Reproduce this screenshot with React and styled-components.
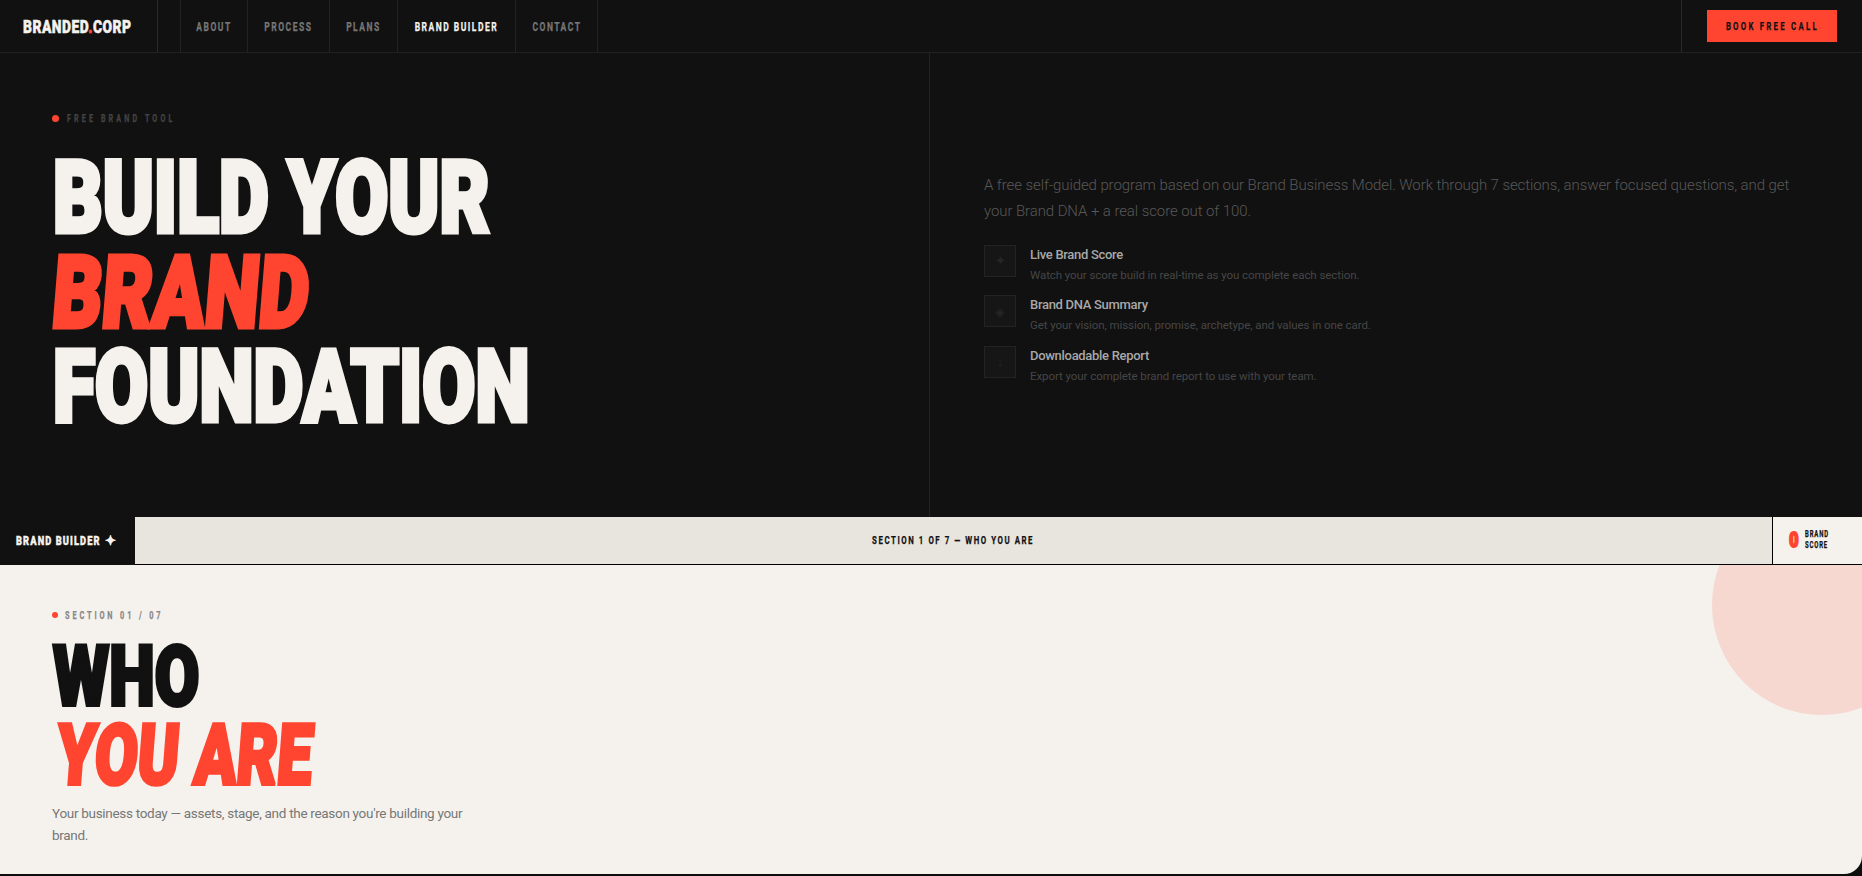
import React from 'react';
import styled, { createGlobalStyle } from 'styled-components';

const RED = '#ff4530';
const INK = '#111111';
const CREAM = '#f5f2ed';

const GlobalStyle = createGlobalStyle`
  * { box-sizing: border-box; }
  html, body { margin: 0; padding: 0; background: #0d0d0d; }
  body { font-family: Roboto, "Liberation Sans", sans-serif; overflow: hidden; }
`;

const Page = styled.div`
  width: 1862px;
  height: 876px;
  display: flex;
  flex-direction: column;
`;

// the labels are a narrow display face, so roboto gets squeezed sideways
const Squeeze = styled.span`
  display: inline-block;
  flex: none;
  white-space: nowrap;
  transform-origin: ${p => p.$origin || 'center'} center;
  transform: scaleX(${p => p.$x || 0.68});
  margin-right: ${p => (p.$trim ? -p.$trim : 0)}px;
`;

const labelFont = `
  font-family: Roboto, sans-serif;
  font-weight: 700;
  text-transform: uppercase;
  -webkit-text-stroke: 0.25px currentColor;
`;

/* top nav */
const Nav = styled.nav`
  height: 53px;
  flex: none;
  display: flex;
  align-items: stretch;
  background: ${INK};
  border-bottom: 1px solid #222;
`;

const Logo = styled.div`
  width: 158px;
  padding-left: 23px;
  display: flex;
  align-items: center;
  border-right: 1px solid #2a2a2a;
  ${labelFont}
  font-weight: 900;
  font-size: 18px;
  letter-spacing: 0.6px;
  color: ${CREAM};
  -webkit-text-stroke: 0.5px ${CREAM};

  b { color: ${RED}; -webkit-text-stroke: 1px ${RED}; }
`;

const NavLinks = styled.div`
  margin-left: 22px;
  display: flex;
  border-left: 1px solid #222;
`;

const NavLink = styled.a`
  width: ${p => p.$w}px;
  display: flex;
  align-items: center;
  justify-content: center;
  border-right: 1px solid #222;
  ${labelFont}
  font-size: 12.5px;
  letter-spacing: 2.2px;
  color: ${p => (p.$active ? CREAM : '#777')};
`;

const NavRight = styled.div`
  margin-left: auto;
  width: 181px;
  display: flex;
  align-items: center;
  justify-content: flex-end;
  padding-right: 25px;
  border-left: 1px solid #2a2a2a;
`;

const CallButton = styled.button`
  width: 130px;
  height: 32px;
  border: 0;
  padding: 0;
  display: flex;
  align-items: center;
  justify-content: center;
  background: ${RED};
  color: ${INK};
  ${labelFont}
  font-size: 11.5px;
  letter-spacing: 3.3px;
`;

/* hero */
const Hero = styled.section`
  height: 464px;
  flex: none;
  display: grid;
  grid-template-columns: 930px 1fr;
  background: ${INK};
`;

const HeroLeft = styled.div`
  padding: 58px 0 0 52px;
  border-right: 1px solid #222;
`;

const Eyebrow = styled.div`
  display: flex;
  align-items: center;
  height: 14px;
  gap: ${p => p.$gap}px;
  ${labelFont}
  font-size: 10.5px;
  letter-spacing: ${p => p.$spacing}px;
  color: ${p => p.$color};
`;

const Dot = styled.i`
  width: ${p => p.$size}px;
  height: ${p => p.$size}px;
  border-radius: 50%;
  background: ${RED};
`;

const HeroTitle = styled.h1`
  margin: 26px 0 0;
  font-family: Roboto, sans-serif;
  font-weight: 900;
  font-size: 100px;
  line-height: 94.5px;
  color: ${CREAM};
  white-space: nowrap;
`;

const TitleLine = styled.span`
  display: block;
  width: max-content;
  margin-left: ${p => p.$indent || 0}px;
  transform-origin: left center;
  transform: scaleX(${p => p.$x}) skewX(${p => p.$skew || 0}deg);
  color: ${p => p.$color || 'inherit'};
  -webkit-text-stroke: ${p => p.$stroke || 0}px currentColor;
`;

const HeroRight = styled.div`
  padding: 119px 54px 0;
`;

const HeroCopy = styled.p`
  margin: 0 0 20.5px;
  font-size: 15px;
  font-weight: 300;
  line-height: 26px;
  letter-spacing: -0.09px;
  color: #585858;
`;

const Features = styled.div`
  display: flex;
  flex-direction: column;
  gap: 10.5px;
`;

const Feature = styled.div`
  display: flex;
  gap: 14px;
`;

const FeatureIcon = styled.div`
  width: 32px;
  height: 32px;
  display: flex;
  align-items: center;
  justify-content: center;
  background: #161616;
  border: 1px solid #232323;
  color: #262626;
  font-size: 13px;
`;

const FeatureTitle = styled.div`
  font-size: 13px;
  font-weight: 500;
  line-height: 20px;
  letter-spacing: -0.3px;
  color: #a8a8a8;
`;

const FeatureText = styled.div`
  font-size: 11.5px;
  line-height: 20px;
  letter-spacing: -0.07px;
  color: #464646;
`;

/* section strip */
const Strip = styled.div`
  height: 48px;
  flex: none;
  display: flex;
  background: #e8e4de;
  border-bottom: 1px solid #000;
`;

const StripBrand = styled.div`
  width: 135px;
  margin-bottom: -1px;
  padding: 0 0 2px 16px;
  display: flex;
  align-items: center;
  gap: 5px;
  background: ${INK};
  color: ${CREAM};
  ${labelFont}
  font-weight: 900;
  font-size: 12.5px;
  letter-spacing: 1.5px;
  -webkit-text-stroke: 0.4px ${CREAM};
`;

const StripTitle = styled.div`
  flex: 1;
  padding-bottom: 1px;
  display: flex;
  align-items: center;
  justify-content: center;
  color: ${INK};
  ${labelFont}
  font-size: 11.5px;
  letter-spacing: 2.3px;
`;

const StripScore = styled.div`
  width: 90px;
  padding: 0 0 1px 16px;
  display: flex;
  align-items: center;
  gap: 6px;
  background: ${CREAM};
  border-left: 1px solid #000;
`;

const ScoreValue = styled.span`
  width: 10px;
  display: flex;
  justify-content: center;
  font-family: Roboto, sans-serif;
  font-weight: 900;
  font-size: 20px;
  line-height: 20px;
  color: ${RED};
  -webkit-text-stroke: 2px ${RED};
`;

const ScoreLabel = styled.span`
  color: ${INK};
  ${labelFont}
  font-size: 8.5px;
  line-height: 11px;
  letter-spacing: 1.2px;
`;

/* who you are */
const Section = styled.section`
  position: relative;
  height: 309px;
  flex: none;
  overflow: hidden;
  padding: 43px 0 0 52px;
  background: ${CREAM};
  border-bottom-right-radius: 18px;
`;

const Circle = styled.div`
  position: absolute;
  top: -70px;
  right: -70px;
  width: 220px;
  height: 220px;
  border-radius: 50%;
  background: ${RED};
  opacity: 0.15;
`;

const SectionTitle = styled.h2`
  margin: 15px 0 0;
  font-family: Roboto, sans-serif;
  font-weight: 900;
  font-size: 84px;
  line-height: 79px;
  color: ${INK};
  white-space: nowrap;
`;

const SectionCopy = styled.p`
  margin: 7px 0 0;
  width: 420px;
  font-size: 13.5px;
  line-height: 22px;
  letter-spacing: -0.3px;
  color: #777;
`;

const links = [
  ['About', 67],
  ['Process', 82],
  ['Plans', 68],
  ['Brand Builder', 118, true],
  ['Contact', 82],
];

const features = [
  ['✦', 'Live Brand Score', 'Watch your score build in real-time as you complete each section.'],
  ['◈', 'Brand DNA Summary', 'Get your vision, mission, promise, archetype, and values in one card.'],
  ['↓', 'Downloadable Report', 'Export your complete brand report to use with your team.'],
];

function App() {
  return (
    <Page>
      <GlobalStyle />
      <Nav>
        <Logo><Squeeze $x={0.77} $origin="left">Branded<b>.</b>Corp</Squeeze></Logo>
        <NavLinks>
          {links.map(([label, w, active]) => (
            <NavLink key={label} $w={w} $active={active}><Squeeze>{label}</Squeeze></NavLink>
          ))}
        </NavLinks>
        <NavRight>
          <CallButton><Squeeze>Book Free Call</Squeeze></CallButton>
        </NavRight>
      </Nav>

      <Hero>
        <HeroLeft>
          <Eyebrow $gap={8} $spacing={4.6} $color="#444">
            <Dot $size={7} />
            <Squeeze $origin="left">Free Brand Tool</Squeeze>
          </Eyebrow>
          <HeroTitle>
            <TitleLine $x={0.77} $stroke={5} $indent={1}>BUILD YOUR</TitleLine>
            <TitleLine $x={0.77} $skew={-6} $stroke={5} $indent={1} $color={RED}>BRAND</TitleLine>
            <TitleLine $x={0.77} $stroke={5} $indent={1}>FOUNDATION</TitleLine>
          </HeroTitle>
        </HeroLeft>
        <HeroRight>
          <HeroCopy>
            A free self-guided program based on our Brand Business Model. Work through 7 sections, answer focused questions, and get your Brand DNA + a real score out of 100.
          </HeroCopy>
          <Features>
            {features.map(([icon, title, text]) => (
              <Feature key={title}>
                <FeatureIcon>{icon}</FeatureIcon>
                <div>
                  <FeatureTitle>{title}</FeatureTitle>
                  <FeatureText>{text}</FeatureText>
                </div>
              </Feature>
            ))}
          </Features>
        </HeroRight>
      </Hero>

      <Strip>
        <StripBrand>
          <Squeeze $x={0.74} $origin="left" $trim={30}>Brand Builder</Squeeze>
          <span>✦</span>
        </StripBrand>
        <StripTitle><Squeeze>Section 1 of 7 — Who You Are</Squeeze></StripTitle>
        <StripScore>
          <ScoreValue><Squeeze $x={0.8}>0</Squeeze></ScoreValue>
          <ScoreLabel>
            <Squeeze $x={0.7} $origin="left">Brand</Squeeze><br />
            <Squeeze $x={0.7} $origin="left">Score</Squeeze>
          </ScoreLabel>
        </StripScore>
      </Strip>

      <Section>
        <Circle />
        <Eyebrow $gap={7} $spacing={4.1} $color="#888">
          <Dot $size={6} />
          <Squeeze $x={0.7} $origin="left">Section 01 / 07</Squeeze>
        </Eyebrow>
        <SectionTitle>
          <TitleLine $x={0.77} $stroke={4} $indent={1}>WHO</TitleLine>
          <TitleLine $x={0.74} $skew={-6} $stroke={4} $indent={5} $color={RED}>YOU ARE</TitleLine>
        </SectionTitle>
        <SectionCopy>
          Your business today — assets, stage, and the reason you're building your brand.
        </SectionCopy>
      </Section>
    </Page>
  );
}

export default App;
